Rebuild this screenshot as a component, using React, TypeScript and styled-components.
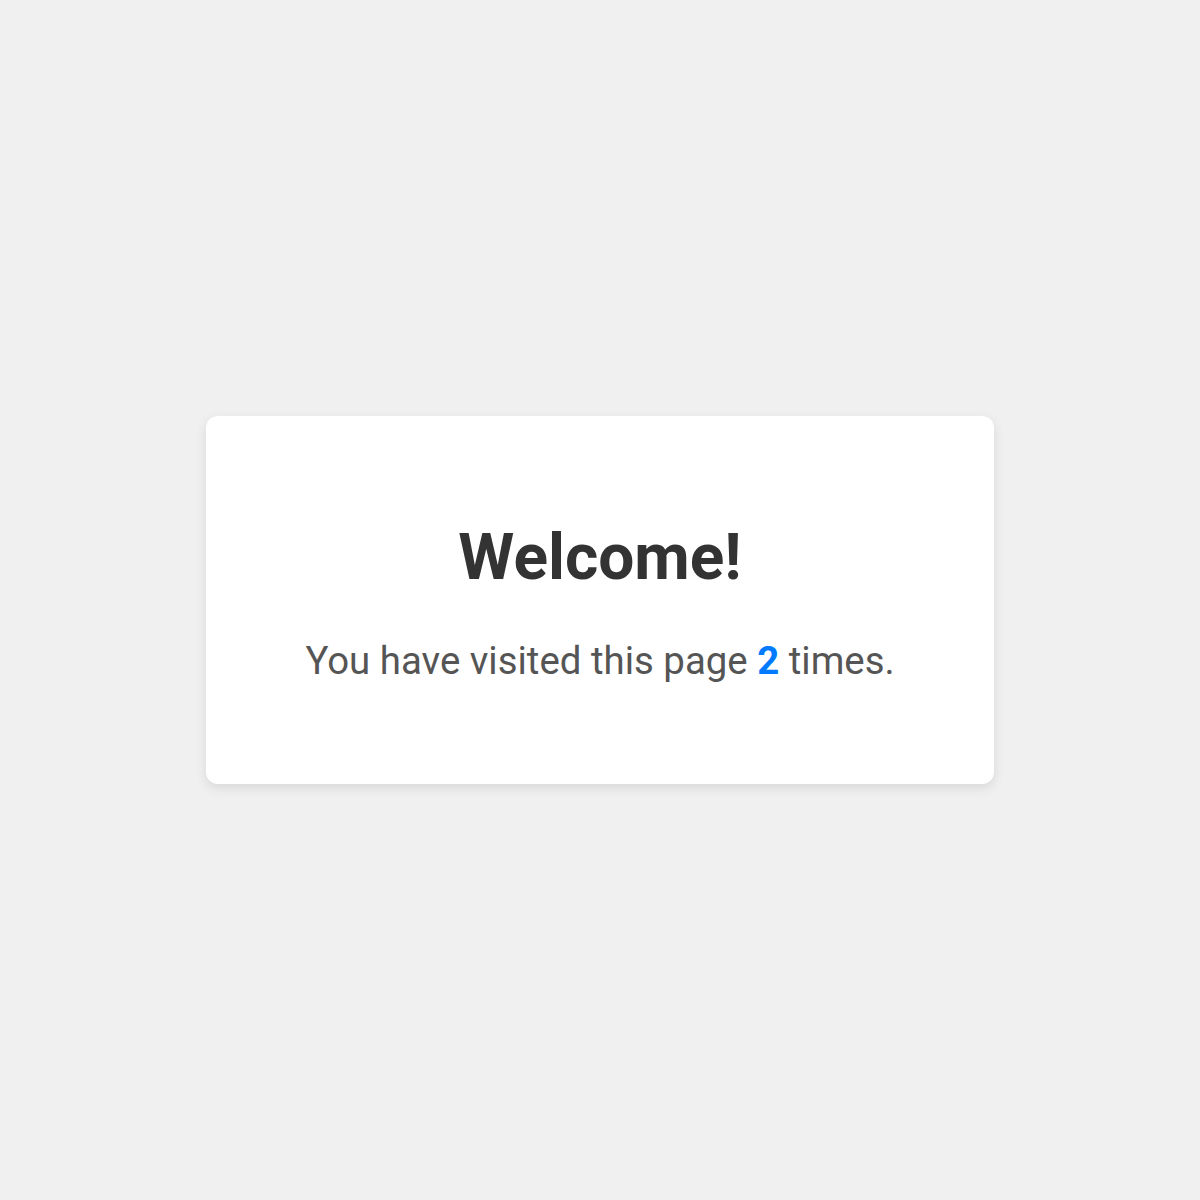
import styled, { createGlobalStyle } from "styled-components";

const GlobalStyle = createGlobalStyle`
  html, body {
    margin: 0;
    padding: 0;
    background: #f0f0f0;
    font-family: Roboto, "Liberation Sans", sans-serif;
  }
`;

const App = () => {
  const visits = 2;
  return (
    <Page>
      <GlobalStyle />
      <Card>
        <Title>Welcome!</Title>
        <Message>
          You have visited this page <Count>{visits}</Count> times.
        </Message>
      </Card>
    </Page>
  );
};

const Page = styled.div`
  display: flex;
  align-items: center;
  justify-content: center;
  min-height: 100vh;
`;

const Card = styled.div`
  background: #ffffff;
  border-radius: 12px;
  box-shadow: 0 4px 12px rgba(0, 0, 0, 0.1);
  padding: 104px 99px 101px;
  text-align: center;
`;

const Title = styled.h1`
  margin: 0 0 43px;
  font-size: 64px;
  font-weight: 700;
  line-height: normal;
  color: #333333;
`;

const Message = styled.p`
  margin: 0;
  font-size: 38.4px;
  line-height: normal;
  color: #555555;
`;

const Count = styled.span`
  font-weight: 700;
  color: #007bff;
`;

export default App;
